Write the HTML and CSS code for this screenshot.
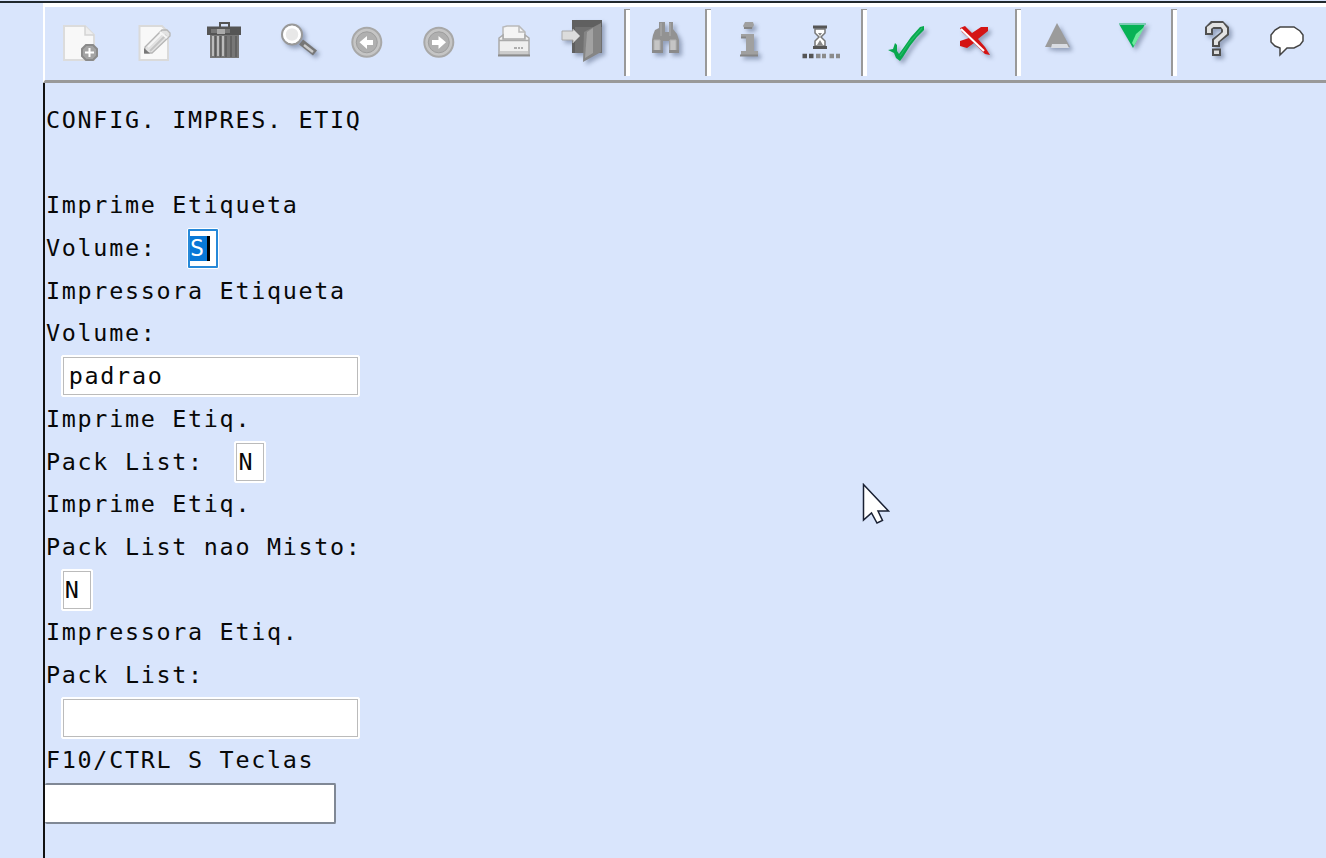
FILE: index.html
```html
<!DOCTYPE html>
<html lang="pt-BR">
	<head>
		<meta charset="UTF-8" />
		<title>Config. Impres. Etiq</title>
		<link rel="stylesheet" href="styles.css">
	</head>
	<body>
		<div class="window">
			<div class="toolbar">
				<div class="group">
					<svg viewBox="45 7 72 73">
						<path d="M64 26H85L94 35V60H64Z" fill="#f8f8f8" stroke="#dcdcdc" stroke-width="2" />
						<path d="M85 26V35H94" fill="#eee" stroke="#d4d4d4" stroke-width="1.5" />
						<path d="M86 45h7l4 4v7l-4 4h-7l-4-4v-7z" fill="#a4a4a4" stroke="#8a8a8a" stroke-width="2" />
						<path d="M85 52.5h9M89.500 48v9" stroke="#fff" stroke-width="2" />
					</svg>
					<svg viewBox="117 7 72 73">
						<path d="M139.500 26H162L168 32V60H139.500Z" fill="#f8f8f8" stroke="#dadada" stroke-width="2" />
						<path d="M145 53V47L162 30L167 30L170 33V36L152 53Z" fill="#e2e2e2" stroke="#b5b5b5" stroke-width="1.300" />
						<path d="M150 51L166 35" stroke="#c4c4c4" stroke-width="2" />
						<path d="M148 47L162 33M160 32l7 6" stroke="#f5f5f5" stroke-width="2" />
						<path d="M144 48v5.500h6z" fill="#777" />
					</svg>
					<svg viewBox="189 7 72 73">
						<path d="M220 27V23H229V27" fill="none" stroke="#555" stroke-width="2" />
						<path d="M210 35H239V58H210Z" fill="#777" />
						<path d="M213 36V56M218 36V56M223 36V56" stroke="#bbb" stroke-width="2" />
						<path d="M215.500 36V57M220.500 36V57M226 36V57M231 36V57M236 36V57" stroke="#5c5c5c" stroke-width="1.500" />
						<path d="M207 26.500H241V35H207Z" fill="#555" />
						<path d="M211 29H230V33H211Z" fill="#777" />
						<path d="M217 29H225V34H217Z" fill="#aaa" />
					</svg>
					<svg class="shadow" viewBox="261 7 72 73">
						<path d="M301 42L315 53" stroke="#777" stroke-width="6.500" />
						<path d="M304 45L313 52" stroke="#ccc" stroke-width="2.500" />
						<circle cx="292" cy="34.500" r="10" fill="#f2f4f6" stroke="#999" stroke-width="2" />
						<circle cx="292" cy="34.500" r="7.500" fill="#e8e8e8" stroke="#fff" stroke-width="2.500" />
					</svg>
					<svg viewBox="333 7 72 73">
						<circle cx="366.800" cy="42.300" r="14.500" fill="#c5c5c5" stroke="#a8a8a8" stroke-width="2" />
						<circle cx="366.800" cy="42.300" r="10.500" fill="#b0b0b0" stroke="#9d9d9d" />
						<path d="M359.500 42.300L367 36V40H373V45H367V49Z" fill="#fff" />
					</svg>
					<svg viewBox="405 7 72 73">
						<circle cx="438.800" cy="42.300" r="14.500" fill="#c5c5c5" stroke="#a8a8a8" stroke-width="2" />
						<circle cx="438.800" cy="42.300" r="10.500" fill="#b0b0b0" stroke="#9d9d9d" />
						<path d="M446 42.300L438.500 36V40H432V45H438.500V49Z" fill="#fff" />
					</svg>
					<svg viewBox="477 7 72 73">
						<path d="M503 40V27L507 26H519L525 32V40" fill="#f4f4f4" stroke="#b9b9b9" stroke-width="1.500" />
						<path d="M519 26V32H525" fill="none" stroke="#b9b9b9" stroke-width="1.500" />
						<path d="M503 35L499 38V55H529V38L525 35V39H503Z" fill="#efefef" stroke="#a9a9a9" stroke-width="1.500" />
						<path d="M499 40.500H529" stroke="#aaa" stroke-width="1.500" />
						<path d="M500 52.500H528" stroke="#ccc" stroke-width="3" />
						<path d="M498 55.500H530" stroke="#8c8c8c" stroke-width="2" />
						<path d="M514 48h3M518 48h2M521 48h2" stroke="#999" stroke-width="1.500" />
					</svg>
					<svg class="shadow" viewBox="549 7 72 73">
						<path d="M572 20H602V53H572Z" fill="#606060" />
						<path d="M575 27H602V53H575Z" fill="#707070" />
						<path d="M584 32L601 23V52L583 62Z" fill="#858585" />
						<path d="M587 32L593 28V53L585 58Z" fill="#a2a2a2" />
						<path d="M562 31H573V29L580 36L573 43V40H562Z" fill="#dcdcdc" stroke="#aaa" />
					</svg>
				</div>
				<div class="group">
					<svg class="shadow" viewBox="630 7 72 73">
						<path d="M653 35L655 30L659 28V22H665V32H669V22H673V29L677 34L679 40V52H669V41H663V52H652V40Z" fill="#929292" />
						<path d="M654 40H660V51H654ZM670 40H676V51H670ZM661 23V36M670 23V36" fill="#c5c5c5" stroke="#b0b0b0" />
						<path d="M652 50H663V53H652ZM669 50H679V53H669Z" fill="#8a8a8a" />
					</svg>
				</div>
				<div class="group">
					<svg class="shadow" viewBox="711 7 72 73">
						<path d="M745 22H753L754 25L752 29H745L743 26ZM741 34H754V51H758V56H741V51H746V38H741Z" fill="#a0a0a0" />
						<path d="M740 55.500H758M741 37.500H746M744 28H752" stroke="#858585" stroke-width="2" />
					</svg>
					<svg viewBox="783 7 72 73">
						<path d="M815 29V33L819 37L815 41V46H825V41L821 37L825 33V29Z" fill="#fff" stroke="#777" stroke-width="1.500" />
						<path d="M818 33H822L820 36ZM817 45L820 40L823 45Z" fill="#888" />
						<path d="M813 27H827M813 47.500H827" stroke="#555" stroke-width="3" />
						<path d="M802.500 56h4.500M809 56h4.500" stroke="#555" stroke-width="4.500" />
						<path d="M816 56h4.500M822 56h4M829.500 56h4.500M836 56h4" stroke="#8b8b8b" stroke-width="4.500" />
					</svg>
				</div>
				<div class="group">
					<svg class="shadow" viewBox="867 7 72 73">
						<path d="M888 50L893 49L895 43L897 45V51L899 54L904 47L911 37L920 27L924 26V30L917 37L910 46L903 57L900 61L896 58L894 53Z" fill="#08a84d" />
						<path d="M900 56L909 43L922 28" fill="none" stroke="#22ba66" stroke-width="1.200" />
					</svg>
					<svg class="shadow" viewBox="939 7 72 73">
						<path d="M960 28L965 26L972 33L981 27H988V31L978 39L985 47L990 55L985 54L974 43L967 48L960 46V41L969 38L962 32Z" fill="#d41414" />
						<path d="M961 29L984 51" stroke="#fff" stroke-width="2" />
					</svg>
				</div>
				<div class="group">
					<svg class="shadow" viewBox="1021 7 72 73">
						<path d="M1057 23L1070 47H1045Z" fill="#9b9b9b" />
						<path d="M1052 44H1067L1069 48H1051Z" fill="#d9dce2" />
					</svg>
					<svg class="shadow" viewBox="1093 7 72 73">
						<path d="M1119 24H1145L1133 48Z" fill="#07b255" />
						<path d="M1143 28L1136 34L1132 43L1134 46L1144 28Z" fill="#70ea9f" />
						<path d="M1119 24H1146" stroke="#7dcbb4" stroke-width="2" />
					</svg>
				</div>
				<div class="group">
					<svg class="shadow" viewBox="1177 7 72 73">
						<path d="M1205 35V27L1211 21H1223L1229 27V35L1220 42V47H1212V39L1221 32V29H1213V35Z" fill="#505050" />
						<path d="M1212 48.500H1221V56H1212Z" fill="#505050" />
						<path d="M1209 33V28L1213 25H1222L1225 29V33L1216 41V45" fill="none" stroke="#e2e2e2" stroke-width="4" />
						<path d="M1214 50.500H1219V54H1214Z" fill="#ddd" />
					</svg>
					<svg viewBox="1249 7 72 73">
						<path d="M1280 48L1275 46L1271 42V35L1275 30L1280 27H1294L1300 31L1303 35V41L1300 45L1294 48H1287L1280 55Z" fill="#fff" stroke="#444" stroke-width="1.500" />
					</svg>
				</div>
			</div>

			<div class="screen">
				<div class="row">CONFIG. IMPRES. ETIQ</div>
				<div class="row"></div>
				<div class="row">Imprime Etiqueta</div>
				<div class="row">Volume:<span class="field short active"><span class="selected">S</span></span></div>
				<div class="row">Impressora Etiqueta</div>
				<div class="row">Volume:</div>
				<div class="row"><span class="field long">padrao</span></div>
				<div class="row">Imprime Etiq.</div>
				<div class="row">Pack List:<span class="field short">N</span></div>
				<div class="row">Imprime Etiq.</div>
				<div class="row">Pack List nao Misto:</div>
				<div class="row"><span class="field short first">N</span></div>
				<div class="row">Impressora Etiq.</div>
				<div class="row">Pack List:</div>
				<div class="row"><span class="field long"></span></div>
				<div class="row">F10/CTRL S Teclas</div>
				<div class="row"><span class="field command"></span></div>
			</div>
		</div>

		<svg class="pointer" viewBox="0 0 28 42">
			<path d="M1.500 1.500V37L9.500 30L15 40L20.500 37.500L16 28H26.500Z" fill="#fff" stroke="#192033" stroke-width="1.500" />
		</svg>
	</body>
</html>
```
FILE: styles.css
```css
:root {
	--background: #d9e5fc;
	--cell: 15.78px;
	--row: 42.7px;
}

*,
*::after {
	box-sizing: border-box;
}

body {
	margin: 0;
	height: 858px;
	padding-top: 1px;
	overflow: hidden;
	background: var(--background);
	font-family: 'Lucida Console', 'DejaVu Sans Mono', monospace;
	font-size: 23.4px;
	letter-spacing: 1.7px;
	color: #080808;
}

.window {
	height: 857px;
	padding-left: 43px;
	border-top: 2px solid #20282d;
}

.toolbar {
	display: grid;
	grid-template-columns: 585px 81px 156px 154px 156px 1fr;
	height: 80px;
	border-top: 4px solid #fff;
	border-left: 2px solid #fff;
	border-bottom: 3px solid #999;
}

.group {
	display: flex;
}

.group svg {
	flex: none;
	width: 72px;
	height: 73px;
}

.group:not(:last-child)::after {
	content: '';
	width: 6px;
	height: 67px;
	margin: 2px 0 0 auto;
	border-left: 2px solid #999;
	border-top: 1px solid #999;
	background: #fff;
}

.shadow {
	filter: drop-shadow(3px 3px 2px rgba(65, 80, 110, 0.45));
}

.screen {
	height: 775px;
	padding-top: 16px;
	border-left: 2px solid #111;
}

.row {
	display: flex;
	align-items: center;
	height: var(--row);
	line-height: var(--row);
	white-space: pre;
	text-indent: 1px;
}

.field {
	display: flex;
	align-items: center;
	height: 42px;
	margin-left: var(--cell);
	padding-left: 5px;
	background: #fff;
	border: 1px solid #fff;
	border-radius: 2px;
	outline: 1px solid #bbb;
	outline-offset: -3px;
}

.long {
	width: 299px;
	padding-left: 6px;
}

.short {
	width: 32px;
	margin-left: calc(var(--cell) * 2 - 1px);
	padding-left: 2px;
}

.first {
	margin-left: var(--cell);
}

.active {
	height: 41px;
	padding-left: 2px;
	outline: 2px solid #2688d8;
}

.selected {
	width: 20px;
	height: 25px;
	line-height: 25px;
	text-indent: 0;
	color: #fff;
	background: #0878d7;
	border-right: 3px solid #000;
}

.command {
	width: 291px;
	height: 41px;
	margin-left: 0;
	border: 2px solid #808895;
	border-left: 0;
	outline: 0;
}

.pointer {
	position: absolute;
	top: 483px;
	left: 862px;
	width: 28px;
	height: 42px;
}
```
